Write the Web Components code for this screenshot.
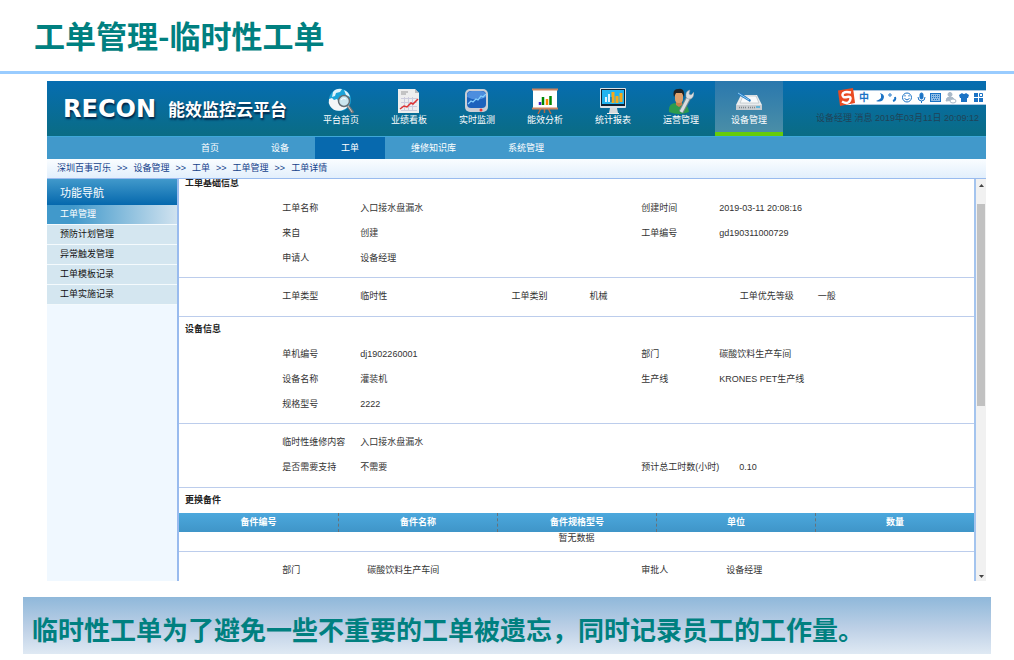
<!DOCTYPE html>
<html lang="zh-CN">
<head>
<meta charset="utf-8">
<title>工单管理-临时性工单</title>
<style>
body{margin:0;background:#fff;font:9px/12px "Liberation Sans","Noto Sans CJK SC",sans-serif;color:#333}
</style>
</head>
<body>
<slide-title>工单管理-临时性工单</slide-title>
<app-window>
  <app-header slot="header">
    <nav-item icon="globe">平台首页</nav-item>
    <nav-item icon="board">业绩看板</nav-item>
    <nav-item icon="monitor">实时监测</nav-item>
    <nav-item icon="easel">能效分析</nav-item>
    <nav-item icon="report">统计报表</nav-item>
    <nav-item icon="person">运营管理</nav-item>
    <nav-item icon="device" active>设备管理</nav-item>
    <ime-bar slot="tools"></ime-bar>
    <span slot="status">设备经理 消息 2019年03月11日 20:09:12</span>
  </app-header>
  <sub-nav slot="header"></sub-nav>
  <bread-crumb slot="header"></bread-crumb>
  <side-nav slot="side"></side-nav>
  <info-section heading="工单基础信息">
    <info-row><info-field label="工单名称">入口接水盘漏水</info-field><info-field label="创建时间">2019-03-11 20:08:16</info-field></info-row>
    <info-row><info-field label="来自">创建</info-field><info-field label="工单编号">gd190311000729</info-field></info-row>
    <info-row><info-field label="申请人">设备经理</info-field></info-row>
  </info-section>
  <info-section>
    <info-row triple><info-field label="工单类型">临时性</info-field><info-field label="工单类别">机械</info-field><info-field label="工单优先等级">一般</info-field></info-row>
  </info-section>
  <info-section heading="设备信息">
    <info-row><info-field label="单机编号">dj1902260001</info-field><info-field label="部门">碳酸饮料生产车间</info-field></info-row>
    <info-row><info-field label="设备名称">灌装机</info-field><info-field label="生产线">KRONES PET生产线</info-field></info-row>
    <info-row><info-field label="规格型号">2222</info-field></info-row>
  </info-section>
  <info-section>
    <info-row><info-field label="临时性维修内容">入口接水盘漏水</info-field></info-row>
    <info-row><info-field label="是否需要支持">不需要</info-field><info-field label="预计总工时数(小时)" wide>0.10</info-field></info-row>
  </info-section>
  <info-section heading="更换备件">
    <parts-table></parts-table>
  </info-section>
  <info-section last>
    <info-row><info-field label="部门" mid>碳酸饮料生产车间</info-field><info-field label="审批人" mid>设备经理</info-field></info-row>
  </info-section>
</app-window>
<slide-note>临时性工单为了避免一些不重要的工单被遗忘，同时记录员工的工作量。</slide-note>

<script>
const define = (name, html, setup) => {
  const t = document.createElement('template');
  t.innerHTML = html;
  customElements.define(name, class extends HTMLElement {
    constructor() {
      super();
      this.attachShadow({mode: 'open'}).append(t.content.cloneNode(true));
    }
    connectedCallback() { if (setup) setup(this, this.shadowRoot); }
  });
};

const icons = {
  globe: `<circle cx="12" cy="12" r="11" fill="#1aa3d8"/><path d="M1 11l3-1 2 2 3-1 2 3 4-2 3 2 4-1a11 11 0 0 1-20 5q-2-3-1-7z" fill="#f4f6f7"/><path d="M5 4q3-4 9-3l-2 3-4 1-1 3-3 1zM16 2q5 2 6 7l-4-2z" fill="#dff3fb"/><path d="M20 18l5 7" stroke="#777" stroke-width="3"/><path d="M20 18l4 6" stroke="#ccc" stroke-width="1"/><circle cx="16" cy="13" r="5.5" fill="#cbe6ef" stroke="#646e74" stroke-width="1.5"/><path d="M13 12q2-3 5-1" stroke="#fff" fill="none"/>`,
  board: `<path d="M2 1h17l4 4v20H2z" fill="#eee"/><path d="M19 1v4h4z" fill="#bbb"/><path d="M5 4h7M5 6h5" stroke="#999"/><path d="M5 10.500h16M5 14.500h16M5 18.500h16M5 22.500h16M8.500 9v14M12.500 9v14M16.500 9v14" stroke="#ccd"/><path d="M4 21l4-3 3 1 4-4 2 1 5-5" fill="none" stroke="#d33" stroke-width="1.500"/>`,
  monitor: `<rect x="1" y="1" width="23" height="23" rx="5" fill="#c9ced6"/><rect x="3" y="3" width="19" height="17" rx="4" fill="#1c62bd"/><path d="M3 9q0-6 5-6h9q5 0 5 6-9 5-19 0z" fill="#4d8ede"/><path d="M4 16l3-3 2 1 3-3 2 1 3-4 2 1 3-3" fill="none" stroke="#86d1ff" stroke-width="1.200"/><circle cx="17" cy="22" r="1.500" fill="#e33"/>`,
  easel: `<path d="M9 20l-3 6M16 20l3 6M12.500 20v5" stroke="#b46a44" stroke-width="1.500"/><rect x="1" y="1" width="24" height="20" fill="#fff"/><path d="M0 1.500h26M0 20.500h26" stroke="#ce8560" stroke-width="2"/><path d="M8 17v-3" stroke="#42c" stroke-width="2.500"/><path d="M11 17V9M18.500 17V8" stroke="#080" stroke-width="2.500"/><path d="M15 17v-6" stroke="#f80" stroke-width="2.500"/>`,
  report: `<path d="M10 20h7l1 5H9z" fill="#d5d9dc"/><path d="M7 25.500h12" stroke="#eee"/><rect x="0" y="0" width="26" height="20" rx="1" fill="#dce3e8"/><rect x="1" y="1" width="24" height="17" fill="#123"/><rect x="2" y="2" width="22" height="14" fill="#20b3f0"/><path d="M6 14V9M9 14V6" stroke="#d9f2ff" stroke-width="2"/><path d="M13 15V4M17 15V8M21 14V5" stroke="#f5a91a" stroke-width="3"/><path d="M11 14V9" stroke="#16609b" stroke-width="1"/>`,
  person: `<path d="M1 24q-1-9 7-9h5q7 0 8 9-10 4-20 0z" fill="#2d9b4d"/><path d="M8 13h6v4l-3 2-3-2z" fill="#c87f4f"/><rect x="7" y="3" width="8" height="12" rx="4" fill="#dda06d"/><path d="M6 9Q4 1 10 1q7-2 6 8l-2-4H8z" fill="#222"/><path d="M13 24l8-15" stroke="#76858e" stroke-width="5"/><path d="M13 24l8-15" stroke="#d8dde0" stroke-width="3"/><path d="M18 9q-1-6 4-7l-1 4 2 1 3-3q0 8-6 7z" fill="#d8dde0" stroke="#87959c" stroke-width=".5"/>`,
  device: `<path d="M5 7h16l5 10v5H0v-5z" fill="#e9ecee"/><path d="M0 17h26v5H0z" fill="#c8cdd1"/><path d="M7 8h13l3 7H4z" fill="#f8fafb" stroke="#aeb8be" stroke-width=".6"/><path d="M3 19.500h7M12 19.500h7" stroke="#7f888d" stroke-width="1.500" stroke-dasharray="1 1"/><rect x="20" y="18" width="4" height="2" fill="#64b5d8"/><path d="M1 6l4-1 10 7-1 2z" fill="#277bc6"/><path d="M2 5l11 7" stroke="#8ed0f4"/>`
};

define('slide-title', `<style>
:host{display:block;border-bottom:3px solid #9cf}
h1{margin:0;padding:11px 34px 12px;font:bold 31px/48px "Noto Sans CJK SC",sans-serif;color:#008080}
</style><h1><slot></slot></h1>`);

define('slide-note', `<style>
:host{display:block;margin:16px 23px 6px;background:linear-gradient(#8fb8da,#bdd0e6 55%,#dfe9f3)}
p{margin:0;padding:14px 9px 7px;font:bold 26px/36px "Noto Sans CJK SC",sans-serif;color:#008080;white-space:nowrap}
</style><p><slot></slot></p>`);

define('app-window', `<style>
:host{display:block;margin:7px 28px 0 47px}
.body{display:flex}
main{flex:1;overflow:hidden;border-right:2px solid #a4c4ee}
.track{width:10px;background:#f1f1f1;display:flex;flex-direction:column;align-items:center;justify-content:space-between;padding:4px 0 2px;box-sizing:border-box}
.rail{flex:1;width:8px;margin:16px 0 10px}
.thumb{height:56%;background:#c1c1c1}
svg{display:block;width:5px;height:5px}
</style>
<slot name="header"></slot>
<div class="body"><slot name="side"></slot><main><slot></slot></main>
<div class="track"><svg viewBox="0 0 5 5"><path d="M0 4l2.500-3L5 4z" fill="#444"/></svg><div class="rail"><div class="thumb"></div></div><svg viewBox="0 0 5 5"><path d="M0 1l2.500 3L5 1z" fill="#444"/></svg></div></div>`);

define('app-header', `<style>
:host{display:flex;height:55px;background:linear-gradient(#066db1,#0a6c84)}
.brand{display:flex;align-items:center;width:244px;padding-left:16px;color:#fff;white-space:nowrap;text-shadow:1px 2px 2px #024}
.mark{width:105px;font:bold 24px/30px "DejaVu Sans",sans-serif}
.name{font:bold 17px/30px "Noto Sans CJK SC",sans-serif}
nav{display:flex}
.right{flex:1;display:flex;flex-direction:column;align-items:flex-end;padding-top:7px;white-space:nowrap;color:#204358}
.status{padding:5px 7px 0 0}
</style>
<div class="brand"><span class="mark">RECON</span><span class="name">能效监控云平台</span></div>
<nav><slot></slot></nav>
<div class="right"><slot name="tools"></slot><div class="status"><slot name="status"></slot></div></div>`);

define('nav-item', `<style>
:host{display:block;width:68px}
a{display:flex;flex-direction:column;align-items:center;box-sizing:border-box;height:55px;padding-top:7px;color:#fff;text-decoration:none}
:host([active]) a{background:linear-gradient(#2a78ae,#4a8ea7);border-bottom:4px solid #66cc0a}
svg{width:26px;height:26px;display:block}
</style><a href="#"><svg viewBox="0 0 26 26"></svg><slot></slot></a>`,
(el, root) => { root.querySelector('svg').innerHTML = icons[el.getAttribute('icon')]; });

define('ime-bar', `<style>
:host{display:block}svg{display:block;width:149px;height:19px}
text{font:bold 10px "Noto Sans CJK SC",sans-serif}
</style>
<svg viewBox="0 0 149 19" fill="none" stroke="#1b73c5">
<rect x="7" y="2" width="142" height="15" fill="#fff" stroke="none"/><path d="M14 2.500h135M14 16.500h135" stroke="#a9c6e0"/>
<path d="M1 2.500l15-2.500 2 15L3 18z" fill="#e94b23" stroke="none"/><path d="M14 4.500Q6 3 5.500 6.500T10 9t3 3.500-8 1" stroke="#fff" stroke-width="2.500"/>
<text x="22" y="13" fill="#1b73c5" stroke="none">中</text>
<path d="M43 5q4 5-4 8 7 2 8-4 0-3-4-4z" fill="#1b73c5" stroke="none"/>
<circle cx="53" cy="7" r="1.200"/><path d="M58 9q1 3-2 4" stroke-width="2"/>
<circle cx="70" cy="9.500" r="4.500"/><path d="M68 7v1.500M72 7v1.500M67.500 10.500q2.500 3 5 0"/>
<rect x="83" y="5" width="3" height="6" rx="1.500" fill="#1b73c5"/><path d="M81 9q0 4 3.500 4T88 9M84.500 13v2"/>
<rect x="93.500" y="5.500" width="10" height="8" fill="#8fbbe4"/><path d="M95 7.500h7M95 9.500h7M96 11.500h5" stroke-dasharray="1 1"/>
<g stroke="#a8b8c8"><circle cx="113" cy="6.500" r="2" fill="#a8b8c8"/><path d="M109 13q0-4 4-4t4 3z" fill="#a8b8c8"/><ellipse cx="116" cy="13" rx="3" ry="2" fill="#fff"/></g>
<path d="M122 7l3-2q2 2 4 0l3 2-1 3h-1v4h-6v-4h-1z" fill="#1b73c5" stroke="none"/>
<g fill="#1b73c5" stroke="none"><path d="M137 5h4v4h-4zM137 10h4v4h-4zM142 10h4v4h-4z"/></g><path d="M142.500 5.500h3v3h-3z"/>
</svg>`);

define('sub-nav', `<style>
:host{display:block;background:#4199cb;border-top:1px solid #3ea7d9}
nav{display:flex;padding-left:128px}
a{padding:0 26px;line-height:22px;color:#fff;text-decoration:none}
.on{background:#0769ae}
</style><nav><a href="#">首页</a><a href="#">设备</a><a href="#" class="on">工单</a><a href="#">维修知识库</a><a href="#">系统管理</a></nav>`);

define('bread-crumb', `<style>
:host{display:block;background:linear-gradient(#fafdff,#e2effc);border-bottom:1px solid #9be}
nav{display:flex;gap:6px;padding-left:10px;line-height:19px;color:#15428b}
a{color:inherit;text-decoration:none}
</style><nav><a href="#">深圳百事可乐</a><span>&gt;&gt;</span><a href="#">设备管理</a><span>&gt;&gt;</span><a href="#">工单</a><span>&gt;&gt;</span><a href="#">工单管理</a><span>&gt;&gt;</span><a href="#">工单详情</a></nav>`);

define('side-nav', `<style>
:host{display:block;width:130px;background:#f0f8ff;border-right:2px solid #9be}
h2{margin:0;padding-left:13px;font:11px/26px "Noto Sans CJK SC",sans-serif;color:#fff;background:linear-gradient(#4199cb,#0568ad)}
a{display:block;padding-left:13px;line-height:19px;border-bottom:1px solid #f4fafd;background:#d4e6f0;color:#111;text-decoration:none}
.on{color:#fff;background:linear-gradient(90deg,#4199cb 20%,#d0e2ef)}
</style><h2>功能导航</h2><nav><a href="#" class="on">工单管理</a><a href="#">预防计划管理</a><a href="#">异常触发管理</a><a href="#">工单模板记录</a><a href="#">工单实施记录</a></nav>`);

define('info-section', `<style>
:host{display:block;padding:6px 0 7px;border-bottom:1px solid #bccdec}
:host([heading]){padding:0 0 6px}
:host(:first-of-type){margin-top:-8px}
:host([last]){border:0;padding-bottom:0;margin-bottom:-2px}
h3{margin:0;padding-left:6px;font-size:9px;line-height:25px;font-weight:bold;color:#222}
</style><h3></h3><slot></slot>`,
(el, root) => {
  const h = root.querySelector('h3');
  if (el.hasAttribute('heading')) h.textContent = el.getAttribute('heading'); else h.remove();
});

define('info-row', `<style>
:host{display:grid;grid-template-columns:359fr 333fr;padding-left:13%;line-height:25px}
:host([triple]){grid-template-columns:229fr 228fr 234fr}
</style><slot></slot>`);

define('info-field', `<style>
:host{display:flex;white-space:nowrap}
b{width:78px;font-weight:normal}
:host([mid]) b{width:85px}
:host([wide]) b{width:98px}
</style><b></b><span><slot></slot></span>`,
(el, root) => { root.querySelector('b').textContent = el.getAttribute('label'); });

define('parts-table', `<style>
:host{display:block}
table{width:100%;table-layout:fixed;border-spacing:0}
thead{background:linear-gradient(#4ca8dd,#3f95c8)}
th{padding:0;line-height:19px;color:#fff}
th+th{border-left:1px dashed #67727a}
td{padding:0;line-height:13px;text-align:center}
</style><table><thead><tr><th>备件编号</th><th>备件名称</th><th>备件规格型号</th><th>单位</th><th>数量</th></tr></thead><tbody><tr><td colspan="5">暂无数据</td></tr></tbody></table>`);
</script>
</body>
</html>
